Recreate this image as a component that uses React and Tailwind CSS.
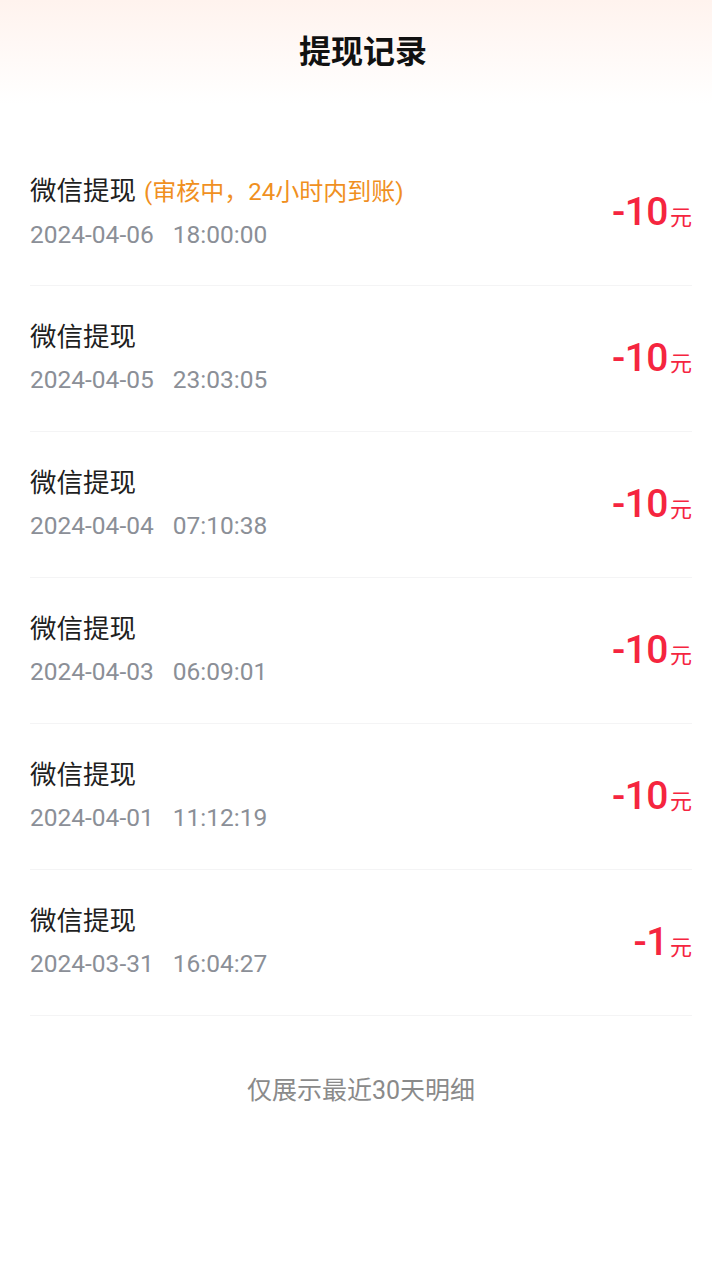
import React from 'react';

const records = [
  { date: '2024-04-06', time: '18:00:00', amount: '-10', pending: true },
  { date: '2024-04-05', time: '23:03:05', amount: '-10' },
  { date: '2024-04-04', time: '07:10:38', amount: '-10' },
  { date: '2024-04-03', time: '06:09:01', amount: '-10' },
  { date: '2024-04-01', time: '11:12:19', amount: '-10' },
  { date: '2024-03-31', time: '16:04:27', amount: '-1' },
];

const font = { fontFamily: 'Roboto, "Noto Sans CJK SC", sans-serif' };

const RecordRow = ({ record }) => (
  <div className="flex items-center justify-between h-[146px] border-b border-[#f4f4f5]">
    <div className="flex flex-col gap-[9px]">
      <div className="text-[26.5px] leading-[34px] text-[#1f1f1f]">
        微信提现
        {record.pending && (
          <span className="text-[24px] text-[#f0901f] ml-[8px]">(审核中，24小时内到账)</span>
        )}
      </div>
      <div className="text-[24.5px] leading-[34px] text-[#8b8f97]">
        {record.date}
        <span className="ml-[19px]">{record.time}</span>
      </div>
    </div>
    <div className="flex items-baseline text-[#f5253f]">
      <span className="text-[39px] leading-none font-medium tracking-[-0.5px]">{record.amount}</span>
      <span className="text-[22px] leading-none ml-[2px]">元</span>
    </div>
  </div>
);

const App = () => {
  return (
    <div className="min-h-[1280px] bg-white" style={font}>
      <div className="h-[104px] bg-gradient-to-b from-[#fff3ee] to-white flex items-start justify-center pt-[31px] pl-[14px]">
        <h1 className="text-[32px] leading-[42px] font-bold text-[#111]">提现记录</h1>
      </div>
      <div className="pl-[30px] pr-[20px] pt-[36px]">
        {records.map((r, i) => (
          <RecordRow key={i} record={r} />
        ))}
      </div>
      <div className="text-center text-[25px] leading-[34px] text-[#8a8a8a] mt-[58px] pl-[10px]">
        仅展示最近30天明细
      </div>
    </div>
  );
};

export default App;
